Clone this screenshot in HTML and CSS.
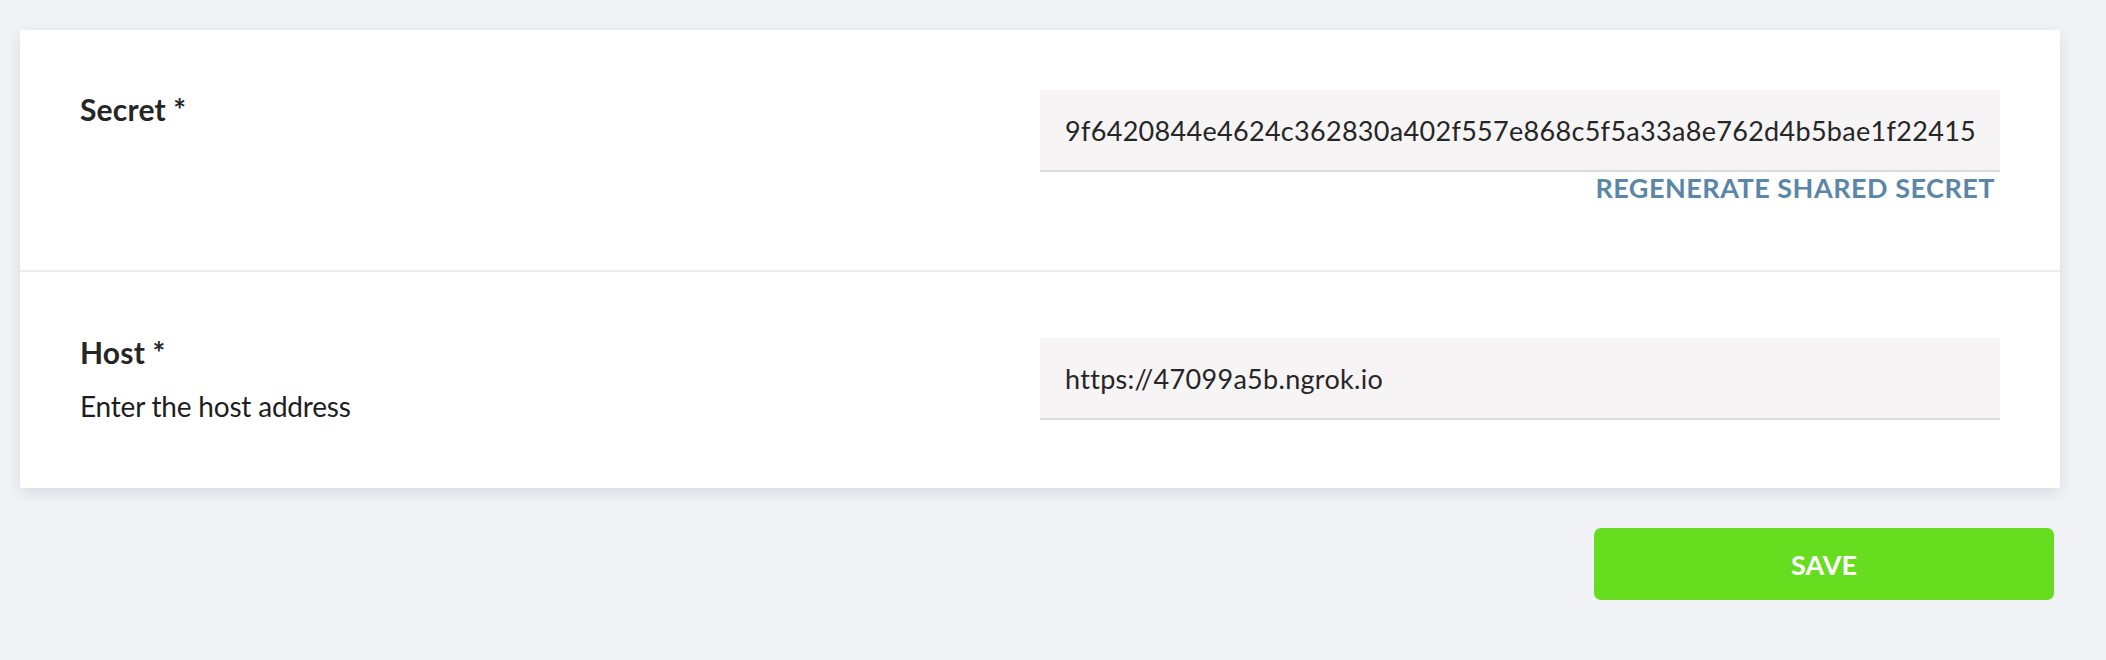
FILE: index.html
```html
<!DOCTYPE html>
<html lang="en">
<head>
    <meta charset="UTF-8">
    <meta name="viewport" content="width=device-width, initial-scale=1.0">
    <title>Settings</title>
    <link rel="stylesheet" href="styles.css">
</head>
<body>
    <main class="page">
        <section class="card">
            <div class="field-row secret-row">
                <div class="field-info">
                    <label class="field-label" for="secret">Secret *</label>
                </div>
                <div class="field-control">
                    <input type="text" id="secret" class="text-input" value="9f6420844e4624c362830a402f557e868c5f5a33a8e762d4b5bae1f22415">
                    <a class="regen-link">Regenerate shared secret</a>
                </div>
            </div>

            <div class="field-row host-row">
                <div class="field-info">
                    <label class="field-label" for="host">Host *</label>
                    <p class="field-help">Enter the host address</p>
                </div>
                <div class="field-control">
                    <input type="text" id="host" class="text-input" value="https://47099a5b.ngrok.io">
                </div>
            </div>
        </section>

        <div class="actions">
            <button class="save-btn">Save</button>
        </div>
    </main>
</body>
</html>
```

FILE: styles.css
```css
body {
    margin: 0;
    padding: 0;
    background: #f2f3f7;
    font-family: Lato, "Open Sans", sans-serif;
    color: #262626;
}

.page {
    padding: 30px 46px 0 20px;
}

.card {
    background: #fff;
    box-shadow: 0 4px 14px rgba(30, 35, 60, 0.12);
}

.field-row {
    display: grid;
    grid-template-columns: 1fr 960px;
    padding: 60px 60px 0 60px;
}

.secret-row {
    height: 180px;
    border-bottom: 2px solid #ececef;
}

.host-row {
    padding-top: 66px;
    height: 150px;
}

.field-label {
    display: block;
    font-weight: 700;
    font-size: 30px;
    line-height: 34px;
    letter-spacing: 0.2px;
    margin-top: 2px;
    color: #262626;
}

.host-row .field-label {
    margin-top: -3px;
}

.field-help {
    margin: 22px 0 0 0;
    font-weight: 400;
    font-size: 28px;
    line-height: 30px;
    letter-spacing: -0.2px;
    color: #1e1e1e;
}

.field-control {
    display: flex;
    flex-direction: column;
    align-items: flex-end;
}

.text-input {
    box-sizing: border-box;
    width: 100%;
    height: 82px;
    padding: 0 25px;
    border: none;
    border-bottom: 2px solid #dddcdd;
    background: #f6f4f5;
    font-family: Lato, "Open Sans", sans-serif;
    font-size: 27px;
    letter-spacing: 0.3px;
    color: #262626;
    outline: none;
}

.regen-link {
    margin-top: 1px;
    margin-right: 5px;
    font-weight: 700;
    font-size: 27px;
    line-height: 30px;
    letter-spacing: 0.5px;
    text-transform: uppercase;
    color: #5a87a8;
    cursor: pointer;
}

.actions {
    display: flex;
    justify-content: flex-end;
    padding: 40px 6px 0 0;
}

.save-btn {
    width: 460px;
    height: 72px;
    border: none;
    border-radius: 7px;
    background: #66dd1e;
    color: #fff;
    font-family: Lato, "Open Sans", sans-serif;
    font-weight: 700;
    font-size: 27px;
    text-transform: uppercase;
    cursor: pointer;
}
```
